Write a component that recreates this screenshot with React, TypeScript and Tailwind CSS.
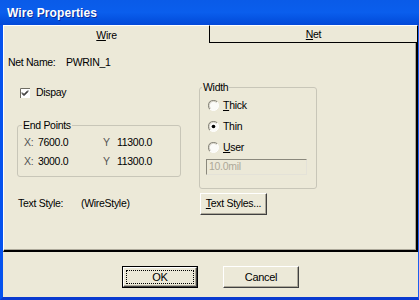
import React from "react";

const Radio = ({ checked }: { checked?: boolean }) => (
  <svg width="11" height="11" viewBox="0 0 12 12" className="shrink-0">
    <circle cx="6" cy="6" r="5.5" fill="#fbfbf8" />
    <path d="M2.1 9.9 A5.5 5.5 0 0 1 9.9 2.1" stroke="#8e8c80" strokeWidth="1.2" fill="none" />
    <path d="M9.9 2.1 A5.5 5.5 0 0 1 2.1 9.9" stroke="#ffffff" strokeWidth="1" fill="none" />
    <path d="M2.8 9.2 A4.5 4.5 0 0 1 9.2 2.8" stroke="#cfccc0" strokeWidth="1" fill="none" />
    {checked && <circle cx="6" cy="6" r="2" fill="#000" />}
  </svg>
);

const Check = () => (
  <svg width="10" height="10" viewBox="0 0 10 10" className="shrink-0">
    <rect x="0" y="0" width="10" height="10" fill="#ffffff" />
    <path d="M0.5 10 V0.5 H10" stroke="#6f6d62" fill="none" />
    <path d="M2 4.5 L4 6.5 L8 2.5 M2 5.5 L4 7.5 L8 3.5" stroke="#000" strokeWidth="1" fill="none" />
  </svg>
);

const Btn = ({ children, w, def }: { children: React.ReactNode; w: string; def?: boolean }) => (
  <div className={`${w} h-[22px] ${def ? "border border-black" : ""} flex`}>
    <div className="flex-1 flex items-center justify-center border-t border-l border-white border-r border-b border-r-[#404040] border-b-[#404040] shadow-[inset_-1px_-1px_#aca899] bg-[#ECE9D8]">
      {def ? (
        <div className="m-[2px] flex-1 self-stretch flex items-center justify-center border border-dotted border-black">
          {children}
        </div>
      ) : (
        children
      )}
    </div>
  </div>
);

export default function App() {
  return (
    <div className="w-[419px] h-[300px] flex flex-col bg-[#ECE9D8] font-['Liberation_Sans',Arial,sans-serif] text-[10.5px] tracking-[-0.3px] text-black overflow-hidden">
      {/* title bar */}
      <div className="h-[25px] shrink-0 flex items-center pl-[7px] bg-gradient-to-b from-[#0a5be8] via-[#0a5eed] to-[#0349d8]">
        <span className="text-white font-bold text-[12px] tracking-[0.1px] [text-shadow:1px_1px_#0b2a9a]">Wire Properties</span>
      </div>

      <div className="flex-1 flex flex-col border-l-[3px] border-l-[#0552ee] border-r border-r-[#1a5ff0] border-b-[3px] border-b-[#0a3ad0]">
        {/* tabs */}
        <div className="h-[18px] shrink-0 flex">
          <div className="w-[207px] flex items-center justify-center pt-[2px] border-t border-l border-white border-r border-r-black">
            <span><u className="underline-offset-1">W</u>ire</span>
          </div>
          <div className="flex-1 flex items-center justify-center pt-[1px] border-t border-t-white border-b border-b-black border-r border-r-black">
            <span><u className="underline-offset-1">N</u>et</span>
          </div>
        </div>

        {/* panel */}
        <div className="h-[209px] shrink-0 flex flex-col border-l border-l-white border-r-2 border-r-black border-b-2 border-b-black shadow-[inset_-1px_-1px_#aca899]">
          <div className="pt-[12px] pl-[4px] flex leading-[14px]">
            <span className="w-[58px]">Net Name:</span>
            <span>PWRIN_1</span>
          </div>

          <div className="mt-[10px] flex">
            <div className="ml-[13px] w-[164px] flex flex-col">
              <div className="mt-[7px] pl-[3px] h-[14px] flex items-center gap-[6px]">
                <Check />
                <span>Dispay</span>
              </div>
              <div className="mt-[25px] relative h-[52px] border border-[#c8c6b8] rounded-[3px]">
                <span className="absolute -top-[8px] left-[4px] px-[1px] bg-[#ECE9D8] leading-[14px]">End Points</span>
                <div className="pt-[9px] pl-[6px] flex flex-col gap-[5px] leading-[14px]">
                  <div className="flex">
                    <span className="w-[14px] text-[#555]">X:</span>
                    <span className="w-[65px]">7600.0</span>
                    <span className="w-[14px] text-[#555]">Y</span>
                    <span>11300.0</span>
                  </div>
                  <div className="flex">
                    <span className="w-[14px] text-[#555]">X:</span>
                    <span className="w-[65px]">3000.0</span>
                    <span className="w-[14px] text-[#555]">Y</span>
                    <span>11300.0</span>
                  </div>
                </div>
              </div>
            </div>

            <div className="ml-[18px] mt-[8px] relative w-[118px] h-[102px] border border-[#c8c6b8] rounded-[3px]">
              <span className="absolute -top-[8px] left-[2px] px-[1px] bg-[#ECE9D8] leading-[14px]">Width</span>
              <div className="pt-[10px] pl-[8px] flex flex-col gap-[7px] leading-[14px]">
                <div className="h-[14px] flex items-center gap-[4px]">
                  <Radio />
                  <span><u className="underline-offset-1">T</u>hick</span>
                </div>
                <div className="h-[14px] flex items-center gap-[4px]">
                  <Radio checked />
                  <span>Thin</span>
                </div>
                <div className="h-[14px] flex items-center gap-[4px]">
                  <Radio />
                  <span><u className="underline-offset-1">U</u>ser</span>
                </div>
              </div>
              <div className="mt-[5px] ml-[6px] w-[101px] h-[16px] flex items-center pl-[2px] border border-t-[#8a887c] border-l-[#8a887c] border-r-[#e4e2d8] border-b-[#e4e2d8] text-[#aca899]">
                10.0mil
              </div>
            </div>
          </div>

          <div className="mt-[4px] pl-[14px] flex items-center">
            <span className="w-[63px]">Text Style:</span>
            <span className="w-[119px]">(WireStyle)</span>
            <Btn w="w-[67px]">
              <span><u className="underline-offset-1">T</u>ext Styles...</span>
            </Btn>
          </div>
        </div>

        {/* buttons */}
        <div className="flex-1 pt-[14px] flex justify-center gap-[25px]">
          <Btn w="w-[76px]" def>
            <span className="text-[11px]">OK</span>
          </Btn>
          <Btn w="w-[76px]">
            <span className="text-[11px]">Cancel</span>
          </Btn>
        </div>
      </div>
    </div>
  );
}
